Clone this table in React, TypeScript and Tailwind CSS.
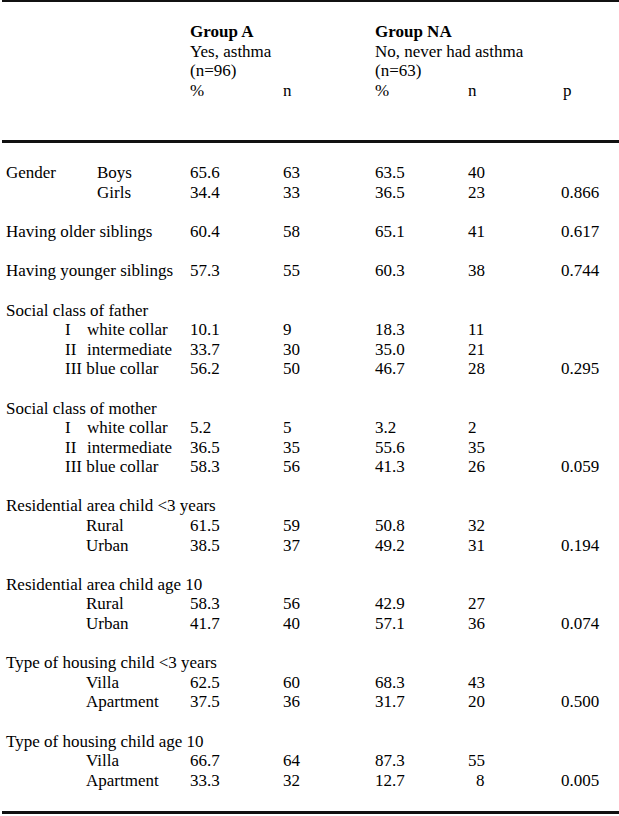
import React from "react";

type Row =
  | { kind: "blank" }
  | { kind: "head"; label: string }
  | {
      kind: "data";
      main?: string;
      sub?: React.ReactNode;
      subX?: number;
      a?: string;
      an?: string;
      na?: string;
      nn?: string;
      nnPad?: boolean;
      p?: string;
    };

const roman = (r: string, t: string) => (
  <span className="flex">
    <span className="w-[22px]">{r}</span>
    <span>{t}</span>
  </span>
);

const rows: Row[] = [
  { kind: "data", main: "Gender", sub: "Boys", subX: 1, a: "65.6", an: "63", na: "63.5", nn: "40" },
  { kind: "data", sub: "Girls", subX: 1, a: "34.4", an: "33", na: "36.5", nn: "23", p: "0.866" },
  { kind: "blank" },
  { kind: "data", main: "Having older siblings", a: "60.4", an: "58", na: "65.1", nn: "41", p: "0.617" },
  { kind: "blank" },
  { kind: "data", main: "Having younger siblings", a: "57.3", an: "55", na: "60.3", nn: "38", p: "0.744" },
  { kind: "blank" },
  { kind: "head", label: "Social class of father" },
  { kind: "data", sub: roman("I", "white collar"), subX: 2, a: "10.1", an: "9", na: "18.3", nn: "11" },
  { kind: "data", sub: roman("II", "intermediate"), subX: 2, a: "33.7", an: "30", na: "35.0", nn: "21" },
  { kind: "data", sub: "III blue collar", subX: 2, a: "56.2", an: "50", na: "46.7", nn: "28", p: "0.295" },
  { kind: "blank" },
  { kind: "head", label: "Social class of mother" },
  { kind: "data", sub: roman("I", "white collar"), subX: 2, a: "5.2", an: "5", na: "3.2", nn: "2" },
  { kind: "data", sub: roman("II", "intermediate"), subX: 2, a: "36.5", an: "35", na: "55.6", nn: "35" },
  { kind: "data", sub: "III blue collar", subX: 2, a: "58.3", an: "56", na: "41.3", nn: "26", p: "0.059" },
  { kind: "blank" },
  { kind: "head", label: "Residential area child <3 years" },
  { kind: "data", sub: "Rural", subX: 3, a: "61.5", an: "59", na: "50.8", nn: "32" },
  { kind: "data", sub: "Urban", subX: 3, a: "38.5", an: "37", na: "49.2", nn: "31", p: "0.194" },
  { kind: "blank" },
  { kind: "head", label: "Residential area child age 10" },
  { kind: "data", sub: "Rural", subX: 3, a: "58.3", an: "56", na: "42.9", nn: "27" },
  { kind: "data", sub: "Urban", subX: 3, a: "41.7", an: "40", na: "57.1", nn: "36", p: "0.074" },
  { kind: "blank" },
  { kind: "head", label: "Type of housing child <3 years" },
  { kind: "data", sub: "Villa", subX: 3, a: "62.5", an: "60", na: "68.3", nn: "43" },
  { kind: "data", sub: "Apartment", subX: 3, a: "37.5", an: "36", na: "31.7", nn: "20", p: "0.500" },
  { kind: "blank" },
  { kind: "head", label: "Type of housing child age 10" },
  { kind: "data", sub: "Villa", subX: 3, a: "66.7", an: "64", na: "87.3", nn: "55" },
  { kind: "data", sub: "Apartment", subX: 3, a: "33.3", an: "32", na: "12.7", nn: "8", nnPad: true, p: "0.005" },
];

const grid = "grid grid-cols-[190px_93px_92px_93px_93px_1fr] h-[19.6px]";

export default function App() {
  return (
    <div
      className="w-[619px] h-[816px] bg-white text-black text-[17px] leading-[19.6px] overflow-hidden"
      style={{ fontFamily: '"Liberation Serif", "Times New Roman", serif' }}
    >
      <div className="ml-[2px] h-[2px] bg-[#111]" />
      {/* header */}
      <div className="pt-[20px] pb-[40px]">
        <div className={grid}>
          <div />
          <div className="col-span-2 font-bold">Group A</div>
          <div className="col-span-3 font-bold">Group NA</div>
        </div>
        <div className={grid}>
          <div />
          <div className="col-span-2">Yes, asthma</div>
          <div className="col-span-3">No, never had asthma</div>
        </div>
        <div className={grid}>
          <div />
          <div className="col-span-2">(n=96)</div>
          <div className="col-span-3">(n=63)</div>
        </div>
        <div className={grid}>
          <div />
          <div>%</div>
          <div>n</div>
          <div>%</div>
          <div>n</div>
          <div className="pl-[2px]">p</div>
        </div>
      </div>
      <div className="ml-[2px] h-[3px] bg-[#111]" />
      {/* body */}
      <div className="pt-[20px] pb-[21px]">
        {rows.map((r, i) => {
          if (r.kind === "blank") return <div key={i} className="h-[19.6px]" />;
          if (r.kind === "head")
            return (
              <div key={i} className="h-[19.6px] pl-[6px] whitespace-nowrap">
                {r.label}
              </div>
            );
          return (
            <div key={i} className={grid}>
              <div className="relative whitespace-nowrap">
                {r.main && <span className="absolute left-[6px]">{r.main}</span>}
                {r.sub && (
                  <span
                    className={
                      "absolute " +
                      (r.subX === 1 ? "left-[97px]" : r.subX === 2 ? "left-[65px]" : "left-[86px]")
                    }
                  >
                    {r.sub}
                  </span>
                )}
              </div>
              <div>{r.a}</div>
              <div>{r.an}</div>
              <div>{r.na}</div>
              <div className={r.nnPad ? "pl-[8px]" : ""}>{r.nn}</div>
              <div>{r.p}</div>
            </div>
          );
        })}
      </div>
      <div className="ml-[2px] h-[3px] bg-[#111]" />
    </div>
  );
}
